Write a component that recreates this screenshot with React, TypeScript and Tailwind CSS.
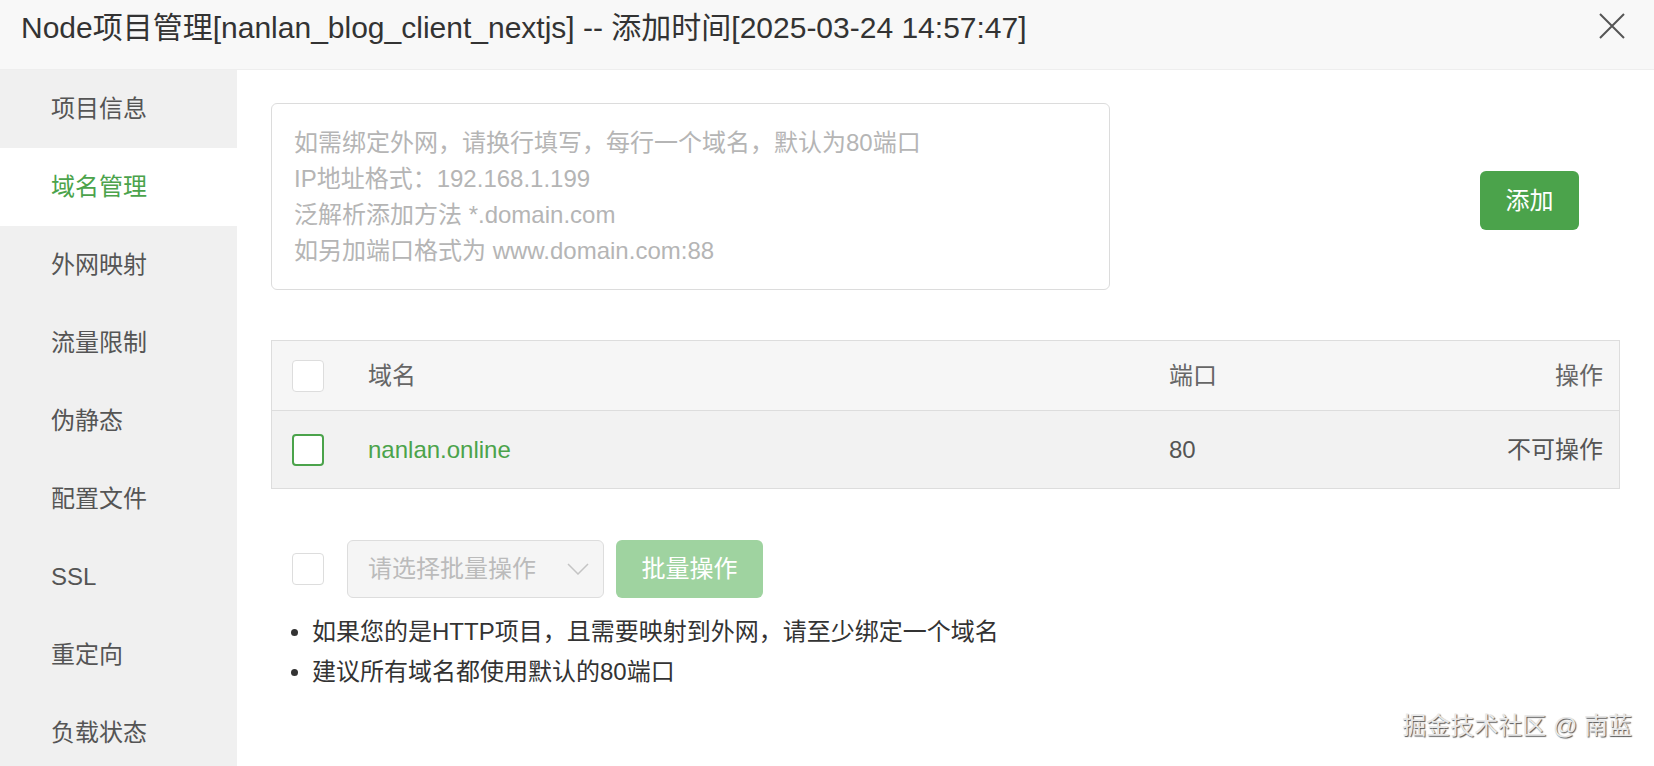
import React from "react";

const font = "font-['Liberation_Sans','Noto_Sans_CJK_SC',sans-serif]";

const menu = ["项目信息", "域名管理", "外网映射", "流量限制", "伪静态", "配置文件", "SSL", "重定向", "负载状态"];

export default function App() {
  return (
    <div className={`w-[1654px] h-[766px] overflow-hidden bg-white flex flex-col ${font}`}>
      {/* Header */}
      <div className="h-[70px] shrink-0 bg-[#f8f8f8] border-b border-[#eeeeee] flex items-center justify-between pl-[21px] pr-[28px]">
        <h1 className="text-[30px] text-[#333] font-normal pb-[14px]">
          Node项目管理[nanlan_blog_client_nextjs] -- 添加时间[2025-03-24 14:57:47]
        </h1>
        <svg width="28" height="28" viewBox="0 0 28 28" className="mb-[18px]">
          <path d="M2 2L26 26M26 2L2 26" stroke="#555" strokeWidth="2" />
        </svg>
      </div>

      <div className="flex flex-1 min-h-0">
        {/* Sidebar */}
        <div className="w-[237px] shrink-0 bg-[#f0f0f0] flex flex-col">
          {menu.map((m) => (
            <div
              key={m}
              className={
                m === "域名管理"
                  ? "h-[78px] shrink-0 flex items-center pl-[51px] text-[24px] bg-white text-[#4ba34b]"
                  : "h-[78px] shrink-0 flex items-center pl-[51px] text-[24px] text-[#555]"
              }
            >
              {m}
            </div>
          ))}
        </div>

        {/* Content */}
        <div className="flex-1 relative pl-[34px] pr-[34px] pt-[33px]">
          <div className="flex items-center">
            <div className="w-[839px] h-[187px] border border-[#dcdcdc] rounded-[6px] pl-[22px] pt-[21px] text-[24px] leading-[36px] text-[#b5b5b5]">
              <div>如需绑定外网，请换行填写，每行一个域名，默认为80端口</div>
              <div>IP地址格式：192.168.1.199</div>
              <div>泛解析添加方法 *.domain.com</div>
              <div>如另加端口格式为 www.domain.com:88</div>
            </div>
            <button className="ml-auto mr-[41px] mt-[8px] w-[99px] h-[59px] rounded-[6px] bg-[#4ba34b] text-white text-[24px]">
              添加
            </button>
          </div>

          {/* Table */}
          <div className="mt-[50px] border border-[#dddddd] text-[24px]">
            <div className="h-[70px] bg-[#f6f6f6] flex items-center border-b border-[#dddddd] text-[#666]">
              <div className="w-[32px] h-[32px] ml-[20px] rounded-[4px] border border-[#dddddd] bg-white" />
              <div className="ml-[44px] w-[801px]">域名</div>
              <div>端口</div>
              <div className="ml-auto mr-[16px]">操作</div>
            </div>
            <div className="h-[77px] bg-[#f2f2f2] flex items-center text-[#555]">
              <div className="w-[32px] h-[32px] ml-[20px] rounded-[4px] border-2 border-[#4ba34b] bg-white" />
              <div className="ml-[44px] w-[801px] text-[#4ba34b]">nanlan.online</div>
              <div>80</div>
              <div className="ml-auto mr-[16px]">不可操作</div>
            </div>
          </div>

          {/* Batch */}
          <div className="mt-[51px] flex items-center">
            <div className="w-[32px] h-[32px] ml-[21px] rounded-[4px] border border-[#dddddd] bg-white" />
            <div className="ml-[23px] w-[257px] h-[58px] rounded-[6px] border border-[#dddddd] bg-[#f5f5f5] flex items-center pl-[20px] pr-[14px] text-[24px] text-[#bbbbbb]">
              <span>请选择批量操作</span>
              <svg width="22" height="12" viewBox="0 0 22 12" className="ml-auto">
                <path d="M1 1L11 11L21 1" fill="none" stroke="#c4c4c4" strokeWidth="1.5" />
              </svg>
            </div>
            <button className="ml-[12px] w-[147px] h-[58px] rounded-[6px] bg-[#9fd3a0] text-white text-[24px]">
              批量操作
            </button>
          </div>

          <ul className="mt-[14px] ml-[20px] text-[24px] text-[#333] leading-[40px]">
            <li className="flex items-center">
              <span className="w-[7px] h-[7px] rounded-full bg-[#333] mr-[14px]" />
              如果您的是HTTP项目，且需要映射到外网，请至少绑定一个域名
            </li>
            <li className="flex items-center">
              <span className="w-[7px] h-[7px] rounded-full bg-[#333] mr-[14px]" />
              建议所有域名都使用默认的80端口
            </li>
          </ul>

          <div className="absolute right-[22px] bottom-[22px] text-[24px] text-[#e8e8e8] [text-shadow:1px_1px_1px_#555,-1px_-1px_0_#fff]">
            掘金技术社区 @ 南蓝
          </div>
        </div>
      </div>
    </div>
  );
}
